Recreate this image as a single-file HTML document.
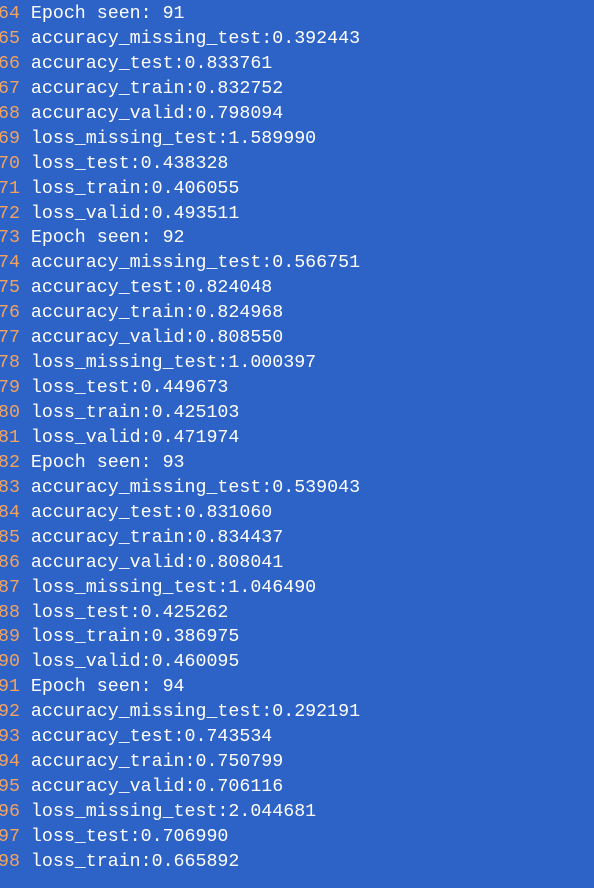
<!DOCTYPE html>
<html><head><style>
html,body{margin:0;padding:0;}
body{width:594px;height:888px;background:#2d62c6;overflow:hidden;position:relative;}
pre{margin:0;position:absolute;left:-2px;top:2px;font-family:"Liberation Mono",monospace;font-size:18.3px;line-height:24.94px;color:#fff;white-space:pre;}
b{font-weight:normal;color:#f3a35f;}
</style></head><body><pre><b>64</b> Epoch seen: 91
<b>65</b> accuracy_missing_test:0.392443
<b>66</b> accuracy_test:0.833761
<b>67</b> accuracy_train:0.832752
<b>68</b> accuracy_valid:0.798094
<b>69</b> loss_missing_test:1.589990
<b>70</b> loss_test:0.438328
<b>71</b> loss_train:0.406055
<b>72</b> loss_valid:0.493511
<b>73</b> Epoch seen: 92
<b>74</b> accuracy_missing_test:0.566751
<b>75</b> accuracy_test:0.824048
<b>76</b> accuracy_train:0.824968
<b>77</b> accuracy_valid:0.808550
<b>78</b> loss_missing_test:1.000397
<b>79</b> loss_test:0.449673
<b>80</b> loss_train:0.425103
<b>81</b> loss_valid:0.471974
<b>82</b> Epoch seen: 93
<b>83</b> accuracy_missing_test:0.539043
<b>84</b> accuracy_test:0.831060
<b>85</b> accuracy_train:0.834437
<b>86</b> accuracy_valid:0.808041
<b>87</b> loss_missing_test:1.046490
<b>88</b> loss_test:0.425262
<b>89</b> loss_train:0.386975
<b>90</b> loss_valid:0.460095
<b>91</b> Epoch seen: 94
<b>92</b> accuracy_missing_test:0.292191
<b>93</b> accuracy_test:0.743534
<b>94</b> accuracy_train:0.750799
<b>95</b> accuracy_valid:0.706116
<b>96</b> loss_missing_test:2.044681
<b>97</b> loss_test:0.706990
<b>98</b> loss_train:0.665892</pre></body></html>
